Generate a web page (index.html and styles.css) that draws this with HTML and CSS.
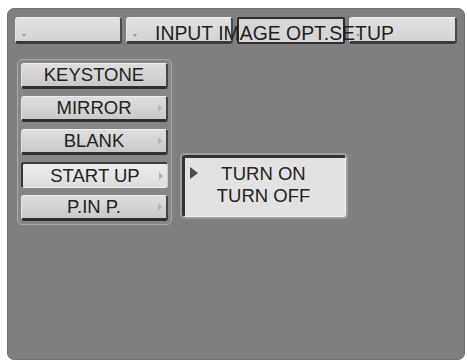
FILE: index.html
```html
<!DOCTYPE html>
<html>
<head>
<meta charset="utf-8">
<link rel="stylesheet" href="styles.css">
</head>
<body>
<div class="panel">
  <div class="tabs">
    <div class="tab"><span class="tab-mark"></span></div>
    <div class="tab"><span class="tab-mark"></span></div>
    <div class="tab tab-active"><span class="tab-mark"></span></div>
    <div class="tab"><span class="tab-mark"></span></div>
    <span class="tabs-label">INPUT IMAGE OPT.SETUP</span>
  </div>
  <div class="content">
    <div class="menu">
      <div class="btn"><span class="btn-text">KEYSTONE</span></div>
      <div class="btn"><span class="btn-text">MIRROR</span><span class="btn-arrow"></span></div>
      <div class="btn"><span class="btn-text">BLANK</span><span class="btn-arrow"></span></div>
      <div class="btn btn-sel"><span class="btn-text">START UP</span><span class="btn-arrow"></span></div>
      <div class="btn"><span class="btn-text">P.IN P.</span><span class="btn-arrow"></span></div>
    </div>
    <div class="sub">
      <div class="sub-inner">
        <div class="sub-row"><span class="sub-mark"></span><span class="sub-text">TURN ON</span></div>
        <div class="sub-row"><span class="sub-mark sub-mark-off"></span><span class="sub-text">TURN OFF</span></div>
      </div>
    </div>
  </div>
</div>
</body>
</html>
```

FILE: styles.css
```css
html, body {
  margin: 0;
  padding: 0;
  background: #ffffff;
}

body {
  font-family: "Liberation Sans", Arial, sans-serif;
  color: #222;
}

.panel {
  box-sizing: border-box;
  margin: 8px 0 0 7px;
  width: 458px;
  height: 352px;
  background: #7f7f7f;
  border: 1px solid #6f6f6f;
  border-radius: 7px;
  padding: 8px 0 0 7px;
  display: flex;
  flex-direction: column;
}

.tabs {
  position: relative;
  display: flex;
  gap: 4px;
  height: 27px;
}

.tab {
  position: relative;
  box-sizing: border-box;
  width: 107px;
  height: 27px;
  background: linear-gradient(#e2e2e2, #d3d3d3);
  border-top: 1px solid #f0f0f0;
  border-left: 1px solid #e6e6e6;
  border-right: 2px solid #4a4a4a;
  border-bottom: 3px solid #3a3a3a;
  border-radius: 3px;
}

.tab:nth-child(3), .tab:nth-child(4) {
  width: 108px;
}

.tab-active {
  background: #d6d6d6;
  border: 2px solid #2e2e2e;
  border-radius: 2px;
}

.tab-mark {
  position: absolute;
  left: 6px;
  bottom: 4px;
  width: 0;
  height: 0;
  border-left: 2px solid transparent;
  border-right: 2px solid transparent;
  border-top: 3px solid #9a9a9a;
}

.tabs-label {
  position: absolute;
  left: 140px;
  top: 3px;
  font-size: 19.4px;
  line-height: 27px;
  color: #1e1e1e;
  white-space: nowrap;
}

.content {
  display: flex;
  align-items: flex-start;
  margin-top: 15px;
  padding-left: 2px;
}

.menu {
  box-sizing: border-box;
  width: 155px;
  padding: 3px;
  background: #868686;
  border: 1px solid #a9a9a9;
  border-radius: 5px;
  display: flex;
  flex-direction: column;
  gap: 7px;
}

.btn {
  position: relative;
  box-sizing: border-box;
  height: 26px;
  display: flex;
  align-items: center;
  justify-content: center;
  background: linear-gradient(#dedede, #c9c9c9);
  border-top: 1px solid #efefef;
  border-left: 1px solid #e2e2e2;
  border-right: 2px solid #454545;
  border-bottom: 3px solid #2f2f2f;
  border-radius: 3px;
}

.btn-sel {
  background: linear-gradient(#ececec, #dedede);
  border-top: 2px solid #3a3a3a;
  border-left: 2px solid #3a3a3a;
  border-right: 1px solid #cfcfcf;
  border-bottom: 1px solid #f2f2f2;
}

.btn-text {
  font-size: 18.5px;
  line-height: 22px;
  color: #222;
  white-space: nowrap;
}

.btn-arrow {
  position: absolute;
  right: 4px;
  top: 50%;
  margin-top: -4px;
  width: 0;
  height: 0;
  border-top: 4px solid transparent;
  border-bottom: 4px solid transparent;
  border-left: 4px solid #b4b4b4;
}

.sub {
  box-sizing: border-box;
  margin-top: 94px;
  margin-left: 8px;
  width: 168px;
  height: 66px;
  padding: 2px;
  background: #9e9e9e;
  border-radius: 5px;
}

.sub-inner {
  box-sizing: border-box;
  height: 100%;
  background: #e2e2e2;
  border-top: 3px solid #333;
  border-left: 3px solid #333;
  border-right: 1px solid #f0f0f0;
  border-bottom: 1px solid #f0f0f0;
  border-radius: 3px;
  padding-top: 5px;
}

.sub-row {
  display: flex;
  align-items: center;
  padding-left: 5px;
  height: 22px;
}

.sub-mark {
  width: 0;
  height: 0;
  border-top: 6px solid transparent;
  border-bottom: 6px solid transparent;
  border-left: 8px solid #4a4a4a;
  margin-top: -2px;
}

.sub-mark-off {
  border-left-color: transparent;
}

.sub-text {
  flex: 1;
  text-align: center;
  padding-right: 16px;
  font-size: 18.5px;
  line-height: 22px;
  color: #222;
  white-space: nowrap;
}
```
